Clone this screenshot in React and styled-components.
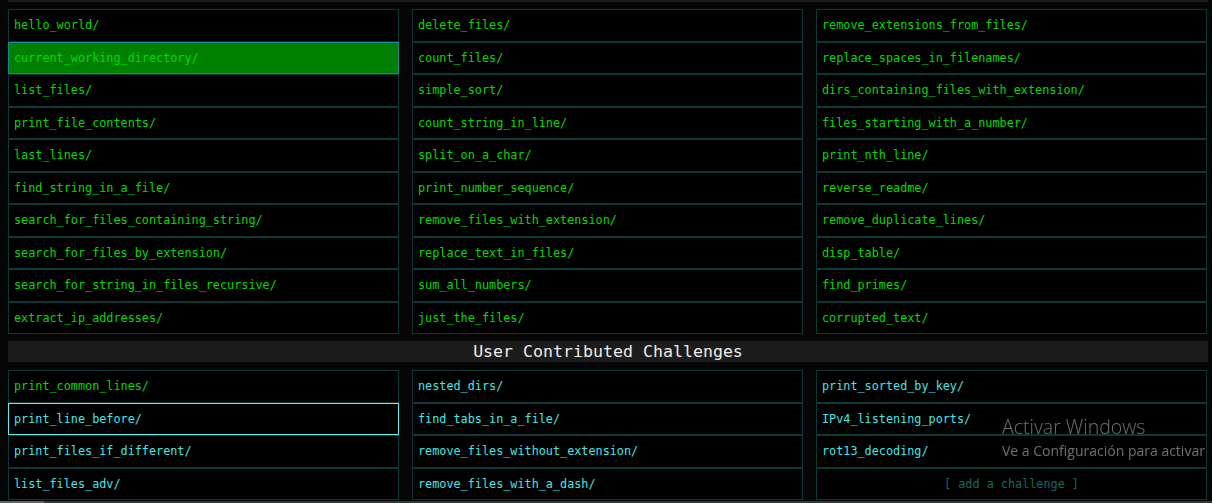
import styled, { createGlobalStyle } from "styled-components";

const GlobalStyle = createGlobalStyle`
  html, body {
    margin: 0;
    background: #060606;
    overflow: hidden;
  }
  body {
    padding: 0 4px 0 8px;
    font-family: "DejaVu Sans Mono", "Liberation Mono", monospace;
  }
`;

const Page = styled.div`
  width: 1200px;
  display: flex;
  flex-direction: column;
`;

const TopBar = styled.div`
  height: 2px;
  background: #1c1c1c;
  margin-bottom: 7px;
`;

const Grid = styled.div`
  display: grid;
  grid-template-columns: repeat(3, 391px);
  grid-auto-rows: 32.5px;
  column-gap: 13px;
`;

const Cell = styled.div`
  box-sizing: border-box;
  display: flex;
  align-items: center;
  justify-content: ${(p) => (p.$center ? "center" : "flex-start")};
  padding: 0 5px 0;
  background: ${(p) => (p.$active ? "#008000" : "#000")};
  border: 1px solid
    ${(p) => (p.$focus ? "#5ff0f0" : p.$active ? "#0f8a8f" : "#0c3838")};
  color: ${(p) =>
    p.$muted ? "#17696c" : p.$user ? "#44e6e6" : "#00dc00"};
  font-size: 11.8px;
  white-space: nowrap;
  cursor: pointer;
`;

const SectionTitle = styled.div`
  height: 21px;
  margin: 7px 0 8px;
  background: #1c1c1c;
  color: #ececec;
  font-size: 16.6px;
  line-height: 21px;
  text-align: center;
`;

const Watermark = styled.div`
  position: fixed;
  left: 1002px;
  top: 413px;
  color: rgba(200, 200, 200, 0.55);
  font-family: "Open Sans", "Noto Sans", sans-serif;
  white-space: nowrap;
  pointer-events: none;
`;

const WatermarkTitle = styled.div`
  font-size: 19.5px;
  font-weight: 300;
  line-height: 27px;
`;

const WatermarkSub = styled.div`
  font-size: 14px;
  line-height: 22px;
`;

const ScrollTrack = styled.div`
  position: fixed;
  left: 0;
  right: 0;
  bottom: 0;
  height: 2px;
  background: #2b3b40;
`;

const ScrollThumb = styled.div`
  width: 44px;
  height: 100%;
  background: #5d6466;
`;

const core = [
  ["hello_world/", "delete_files/", "remove_extensions_from_files/"],
  ["current_working_directory/", "count_files/", "replace_spaces_in_filenames/"],
  ["list_files/", "simple_sort/", "dirs_containing_files_with_extension/"],
  ["print_file_contents/", "count_string_in_line/", "files_starting_with_a_number/"],
  ["last_lines/", "split_on_a_char/", "print_nth_line/"],
  ["find_string_in_a_file/", "print_number_sequence/", "reverse_readme/"],
  ["search_for_files_containing_string/", "remove_files_with_extension/", "remove_duplicate_lines/"],
  ["search_for_files_by_extension/", "replace_text_in_files/", "disp_table/"],
  ["search_for_string_in_files_recursive/", "sum_all_numbers/", "find_primes/"],
  ["extract_ip_addresses/", "just_the_files/", "corrupted_text/"],
];

const user = [
  ["print_common_lines/", "nested_dirs/", "print_sorted_by_key/"],
  ["print_line_before/", "find_tabs_in_a_file/", "IPv4_listening_ports/"],
  ["print_files_if_different/", "remove_files_without_extension/", "rot13_decoding/"],
  ["list_files_adv/", "remove_files_with_a_dash/", null],
];

const App = () => {
  return (
    <>
      <GlobalStyle />
      <Page>
        <TopBar />
        <Grid>
          {core.flat().map((name) => (
            <Cell key={name} $active={name === "current_working_directory/"}>
              {name}
            </Cell>
          ))}
        </Grid>
        <SectionTitle>User Contributed Challenges</SectionTitle>
        <Grid>
          {user.flat().map((name, i) =>
            name ? (
              <Cell
                key={name}
                $user={name !== "print_common_lines/"}
                $focus={name === "print_line_before/"}
              >
                {name}
              </Cell>
            ) : (
              <Cell key={"add" + i} $center $muted>
                [ add a challenge ]
              </Cell>
            )
          )}
        </Grid>
      </Page>
      <Watermark>
        <WatermarkTitle>Activar Windows</WatermarkTitle>
        <WatermarkSub>Ve a Configuración para activar</WatermarkSub>
      </Watermark>
      <ScrollTrack>
        <ScrollThumb />
      </ScrollTrack>
    </>
  );
};

export default App;
